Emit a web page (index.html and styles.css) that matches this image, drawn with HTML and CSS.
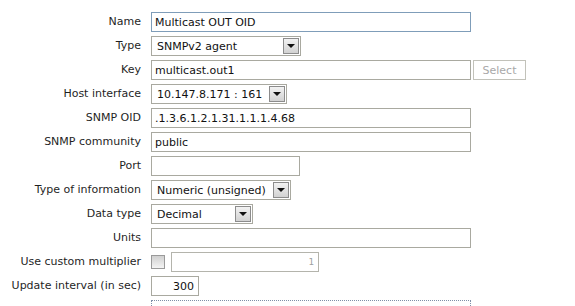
FILE: index.html
```html
<!DOCTYPE html>
<html lang="en">
<head>
    <meta charset="UTF-8">
    <title>Item</title>
    <link rel="stylesheet" href="styles.css">
</head>
<body>
    <!-- Item form -->
    <div class="formList">
        <label class="formLabel">Name</label>
        <div class="formField"><input class="textbox focused w320" type="text" value="Multicast OUT OID"></div>

        <label class="formLabel">Type</label>
        <div class="formField">
            <div class="select w150"><span>SNMPv2 agent</span><span class="arrow"></span></div>
        </div>

        <label class="formLabel">Key</label>
        <div class="formField">
            <input class="textbox w320" type="text" value="multicast.out1">
            <button class="selectBtn" disabled>Select</button>
        </div>

        <label class="formLabel">Host interface</label>
        <div class="formField">
            <div class="select w136"><span>10.147.8.171 : 161</span><span class="arrow"></span></div>
        </div>

        <label class="formLabel">SNMP OID</label>
        <div class="formField"><input class="textbox w320" type="text" value=".1.3.6.1.2.1.31.1.1.1.4.68"></div>

        <label class="formLabel">SNMP community</label>
        <div class="formField"><input class="textbox w320" type="text" value="public"></div>

        <label class="formLabel">Port</label>
        <div class="formField"><input class="textbox w149" type="text" value=""></div>

        <label class="formLabel">Type of information</label>
        <div class="formField">
            <div class="select w140"><span>Numeric (unsigned)</span><span class="arrow"></span></div>
        </div>

        <label class="formLabel">Data type</label>
        <div class="formField">
            <div class="select w102"><span>Decimal</span><span class="arrow"></span></div>
        </div>

        <label class="formLabel">Units</label>
        <div class="formField"><input class="textbox w320" type="text" value=""></div>

        <label class="formLabel">Use custom multiplier</label>
        <div class="formField">
            <span class="checkbox"></span>
            <input class="textbox w148 number" type="text" value="1" disabled>
        </div>

        <label class="formLabel">Update interval (in sec)</label>
        <div class="formField"><input class="textbox w48 number" type="text" value="300"></div>

        <label class="formLabel lastRow"></label>
        <div class="formField lastRow"><div class="dottedBox"></div></div>
    </div>
</body>
</html>
```

FILE: styles.css
```css
/* Page base */
body {
    margin: 0;
    padding: 0;
    background: #fff;
    overflow: hidden;
    font-family: Verdana, "DejaVu Sans", sans-serif;
    font-size: 11px;
    color: #1f1f1f;
}

/* Two column form: labels right, fields left */
.formList {
    display: grid;
    grid-template-columns: 141px 1fr;
    grid-auto-rows: 20px;
    column-gap: 10px;
    row-gap: 4px;
    padding-top: 12px;
}

.formLabel {
    text-align: right;
    line-height: 20px;
    white-space: nowrap;
}

.formField {
    display: flex;
    align-items: center;
    gap: 2px;
}

/* last row is cut off by the window */
.lastRow {
    height: 6px;
    overflow: hidden;
    align-items: flex-start;
}

/* Text inputs */
.textbox {
    box-sizing: border-box;
    height: 20px;
    margin: 0;
    padding: 0 3px;
    border: 1px solid #a9a9a0;
    background: #fff;
    font-family: inherit;
    font-size: 11px;
    color: #111;
    outline: none;
}

.textbox.focused {
    border-color: #7f9db9;
}

.textbox.number {
    text-align: right;
    padding-right: 4px;
}

.textbox:disabled {
    color: #a0a0a0;
    border-color: #b4b4ac;
    background: #fff;
    font-family: "DejaVu Sans Mono", monospace;
    font-size: 9px;
}

.w320 { width: 320px; }
.w149 { width: 149px; }
.w148 { width: 148px; margin-left: 4px; }
.w48 { width: 48px; }

/* Select button next to key */
.selectBtn {
    box-sizing: border-box;
    height: 20px;
    width: 53px;
    margin: 0;
    padding: 0;
    border: 1px solid #c2c2ba;
    background: #fff;
    color: #a8a8a8;
    font-family: inherit;
    font-size: 11px;
}

/* Dropdowns */
.select {
    box-sizing: border-box;
    height: 20px;
    display: flex;
    align-items: center;
    justify-content: space-between;
    border: 1px solid #a9a9a0;
    padding: 0 1px 0 5px;
    color: #111;
    white-space: nowrap;
}

.w150 { width: 150px; }
.w136 { width: 136px; }
.w140 { width: 140px; }
.w102 { width: 102px; }

.arrow {
    position: relative;
    box-sizing: border-box;
    width: 16px;
    height: 16px;
    border: 1px solid #8c8c8c;
    background: linear-gradient(#f2f2f2, #d2d2d2);
}

/* small black triangle in the dropdown button */
.arrow::after {
    content: "";
    position: absolute;
    left: 3px;
    top: 5px;
    border-left: 4px solid transparent;
    border-right: 4px solid transparent;
    border-top: 4px solid #111;
}

/* Checkbox */
.checkbox {
    box-sizing: border-box;
    width: 14px;
    height: 14px;
    border: 1px solid #9a9a9a;
    background: linear-gradient(#d0d0d0, #f4f4f4);
}

/* Next field, cut off at bottom */
.dottedBox {
    box-sizing: border-box;
    width: 320px;
    height: 6px;
    border: 1px dotted #7f8fa8;
    border-bottom: none;
}
```
